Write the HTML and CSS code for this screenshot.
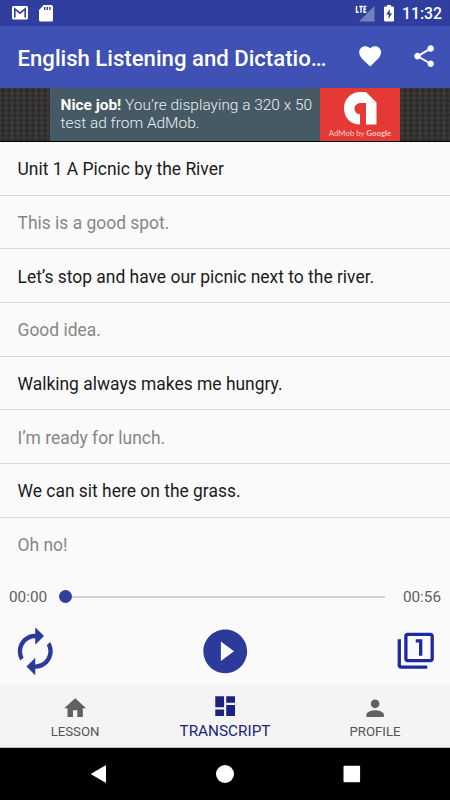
FILE: index.html
```
<!DOCTYPE html>
<html lang="en">
<head>
<meta charset="utf-8">
<title>English Listening and Dictation</title>
<link rel="stylesheet" href="styles.css">
</head>
<body>
<div class="screen">
  <header class="status">
    <svg class="mail" viewBox="0 0 16 14"><rect width="16" height="13.5" rx="1.5" fill="#fff"/><path d="M2.8 11.5V3L8 7.2 13.2 3v8.5" fill="none" stroke="#303f9f" stroke-width="1.6"/></svg>
    <svg class="sd" viewBox="0 0 14 17"><path d="M4.8 0H12.4Q14 0 14 1.6V15Q14 16.5 12.4 16.5H1.6Q0 16.5 0 15V5Z" fill="#fff"/><path d="M5.7 2v3M8.3 2v3M10.9 2v3" stroke="#303f9f" stroke-width="1.4"/></svg>
    <svg class="signal" viewBox="0 0 20 17"><path d="M19.5 1v15.5H4Z" fill="#7680bd"/><path d="M1.5 1v6.2h2.3M4.3 1.5h3.4M6 1.5v6.2M11.4 1.5H9.1v5.7h2.3M9.1 4.3h2" fill="none" stroke="#fff" stroke-width="1.4"/></svg>
    <svg class="battery" viewBox="0 0 10 17"><path d="M3 0h4v1.5h1.8Q10 1.5 10 2.7V15.3Q10 16.5 8.8 16.5H1.2Q0 16.5 0 15.3V2.7Q0 1.5 1.2 1.5H3Z" fill="#fff"/><path d="M5.8 4 2.2 9.6h2.4V14L8 8.3H5.8Z" fill="#303f9f"/></svg>
    <span class="clock">11:32</span>
  </header>
  <div class="toolbar">
    <h1>English Listening and Dictatio…</h1>
    <svg class="heart" viewBox="0 0 24 24"><path d="M12 21.35l-1.45-1.32C5.4 15.36 2 12.28 2 8.5 2 5.42 4.42 3 7.5 3c1.74 0 3.41.81 4.5 2.09C13.09 3.81 14.76 3 16.5 3 19.58 3 22 5.42 22 8.5c0 3.78-3.4 6.86-8.55 11.54z"/></svg>
    <svg class="share" viewBox="0 0 24 24"><path d="M18 16.08c-.76 0-1.44.3-1.96.77L8.91 12.7c.05-.23.09-.46.09-.7s-.04-.47-.09-.7l7.05-4.11c.54.5 1.25.81 2.04.81 1.66 0 3-1.34 3-3s-1.34-3-3-3-3 1.34-3 3c0 .24.04.47.09.7L8.04 9.81C7.5 9.31 6.79 9 6 9c-1.66 0-3 1.34-3 3s1.34 3 3 3c.79 0 1.5-.31 2.04-.81l7.12 4.16c-.05.21-.08.43-.08.65 0 1.61 1.31 2.92 2.92 2.92s2.92-1.31 2.92-2.92-1.31-2.92-2.92-2.92z"/></svg>
  </div>
  <div class="ad">
    <div class="adtext"><p class="l1"><b>Nice job!</b> You’re displaying a 320 x 50</p><p class="l2">test ad from AdMob.</p></div>
    <div class="admob">
      <svg viewBox="0 0 34 34"><path d="M17 33.5C7 33.5 1 26 1 17S8 1 17 1h6l10.5 10.5v22H23V12h-5c-4 0-6.5 2.5-6.5 5.5s2 5.7 5.5 5.7Z" fill="#fff"/><path d="M23 11.5h10.5l-1-1Z" fill="#ddd"/></svg>
      <span>AdMob by <b>Google</b></span>
    </div>
  </div>
  <main class="list">
    <p>Unit 1 A Picnic by the River</p>
    <p class="dim">This is a good spot.</p>
    <p>Let’s stop and have our picnic next to the river.</p>
    <p class="dim">Good idea.</p>
    <p>Walking always makes me hungry.</p>
    <p class="dim">I’m ready for lunch.</p>
    <p>We can sit here on the grass.</p>
    <p class="dim">Oh no!</p>
  </main>
  <div class="seek"><span>00:00</span><div class="track"><i></i></div><span>00:56</span></div>
  <div class="controls">
    <svg class="repeat" viewBox="0 0 24 24"><path d="M12 6v3l4-4-4-4v3c-4.42 0-8 3.58-8 8 0 1.57.46 3.03 1.24 4.26L6.7 14.8c-.45-.83-.7-1.79-.7-2.8 0-3.31 2.69-6 6-6zm6.76 1.74L17.3 9.2c.44.84.7 1.79.7 2.8 0 3.31-2.69 6-6 6v-3l-4 4 4 4v-3c4.42 0 8-3.58 8-8 0-1.57-.46-3.03-1.24-4.26z"/></svg>
    <svg class="play" viewBox="0 0 24 24"><path d="M12 2C6.48 2 2 6.48 2 12s4.48 10 10 10 10-4.48 10-10S17.52 2 12 2zm-2 14.5v-9l6 4.5-6 4.5z"/></svg>
    <svg class="one" viewBox="0 0 24 24"><path d="M3 5H1v16c0 1.1.9 2 2 2h16v-2H3V5zm11 10h2V5h-4v2h2v8zm7-14H7c-1.1 0-2 .9-2 2v14c0 1.1.9 2 2 2h14c1.1 0 2-.9 2-2V3c0-1.1-.9-2-2-2zm0 16H7V3h14v14z"/></svg>
  </div>
  <nav class="tabs">
    <div class="tab"><svg viewBox="0 0 24 24"><path d="M10 20v-6h4v6h5v-8h3L12 3 2 12h3v8z"/></svg><span>LESSON</span></div>
    <div class="tab active"><svg viewBox="0 0 24 24"><path d="M3 13h8V3H3v10zm0 8h8v-6H3v6zm10 0h8V11h-8v10zm0-18v6h8V3h-8z"/></svg><span>TRANSCRIPT</span></div>
    <div class="tab"><svg viewBox="0 0 24 24"><path d="M12 12c2.21 0 4-1.79 4-4s-1.79-4-4-4-4 1.79-4 4 1.79 4 4 4zm0 2c-2.67 0-8 1.34-8 4v2h16v-2c0-2.66-5.33-4-8-4z"/></svg><span>PROFILE</span></div>
  </nav>
  <footer class="sysnav">
    <svg viewBox="0 0 18 18"><path d="M16 .8v16.4Q16 18 15.2 17.6L1.500 9.600Q.5 9 1.500 8.400L15.200.4Q16 0 16 .8Z"/></svg>
    <svg viewBox="0 0 18 18"><circle cx="9" cy="9" r="9"/></svg>
    <svg viewBox="0 0 18 18"><rect x=".5" y=".7" width="16.6" height="16.6" rx="1"/></svg>
  </footer>
</div>
</body>
</html>
```
FILE: styles.css
```
* { box-sizing: border-box; }
body { margin: 0; font-family: Roboto, sans-serif; background: #fafafa; }
p, h1 { margin: 0; }
svg { display: block; flex: none; }
.screen { width: 450px; height: 800px; display: flex; flex-direction: column; overflow: hidden; }

.status { height: 26px; flex: none; background: #303f9f; display: flex; align-items: flex-start; padding: 5px 9px 0 12px; color: #fff; }
.mail { width: 16px; height: 14px; margin-top: 1px; }
.sd { width: 14px; height: 17px; margin-left: 11px; }
.signal { width: 20px; height: 17px; margin-left: auto; }
.battery { width: 10px; height: 17px; margin-left: 9px; }
.clock { font-size: 15.8px; font-weight: 500; line-height: 18px; width: 39px; margin-left: 8px; white-space: nowrap; }

.toolbar { height: 61.5px; flex: none; background: #3f51b5; display: flex; align-items: center; padding: 0 13px 0 17.5px; }
.toolbar h1 { flex: 1; color: #fff; font-size: 22.15px; font-weight: 500; line-height: 26px; white-space: nowrap; padding-top: 2px; }
.toolbar svg { width: 26.3px; height: 26.3px; fill: #fff; margin-top: -1px; }
.toolbar .share { margin-left: 27px; }

.ad { height: 54.5px; flex: none; display: flex; justify-content: center; border-bottom: 1px solid #000; background: radial-gradient(circle, #2b2a29 1.5px, #3b3938 2.5px) 0 0 / 6px 5px; }
.adtext { width: 270px; background: #455a64; padding: 8px 0 0 10.5px; color: #eceff1; font-size: 15.45px; line-height: 18px; font-weight: 300; white-space: nowrap; }
.adtext b { font-weight: 700; color: #fff; }
.admob { width: 80px; background: #e53935; color: #f9c9c7; display: flex; flex-direction: column; align-items: center; padding-top: 3px; }
.admob svg { width: 34px; height: 34px; }
.admob span { font: 7.8px/12px Lato, sans-serif; margin-top: 2px; white-space: nowrap; }
.admob b { font-weight: 700; }

.list { flex: none; }
.list p { height: 53.7px; display: flex; align-items: center; padding: 2px 0 0 17.5px; font-size: 17.45px; color: #1b1b1b; border-bottom: 1px solid #d9d9d9; white-space: nowrap; }
.list p:last-child { border-bottom: 0; padding-top: 0; }
.list .dim { color: #868686; }

.seek { height: 42px; flex: none; display: flex; align-items: center; justify-content: space-between; padding: 0 9px; font-size: 15.3px; color: #606060; margin-top: 4px; }
.track { width: 320px; height: 2px; background: #d2d2d2; margin: 0 8px; display: flex; align-items: center; }
.track i { width: 13px; height: 13px; border-radius: 50%; background: #303f9f; margin-left: -6px; }

.controls { height: 66px; flex: none; display: flex; align-items: center; justify-content: space-between; padding: 1px 15px 0 9px; fill: #2c3a9c; }
.repeat, .play { width: 52.5px; height: 52.5px; }
.play { margin-right: 7px; }
.one { width: 39.5px; height: 39.5px; fill: #1b2aa0; }

.tabs { height: 64px; margin-top: auto; flex: none; background: #f4f4f4; border-bottom: 1px solid #bbb; display: grid; grid-template-columns: repeat(3, 1fr); }
.tab { display: flex; flex-direction: column; align-items: center; padding-top: 11px; color: #555; fill: #616161; font-size: 13.2px; line-height: 18px; }
.tab svg { width: 26.3px; height: 26.3px; }
.tab span { margin-top: 2px; }
.tab.active { padding-top: 9px; color: #1a237e; fill: #1a237e; font-size: 15.3px; }
.tab.active span { margin-top: 3px; }

.sysnav { height: 52.4px; flex: none; background: #000; fill: #fff; display: flex; align-items: center; justify-content: center; gap: 108.5px; }
.sysnav svg { width: 18px; height: 18px; }
```
